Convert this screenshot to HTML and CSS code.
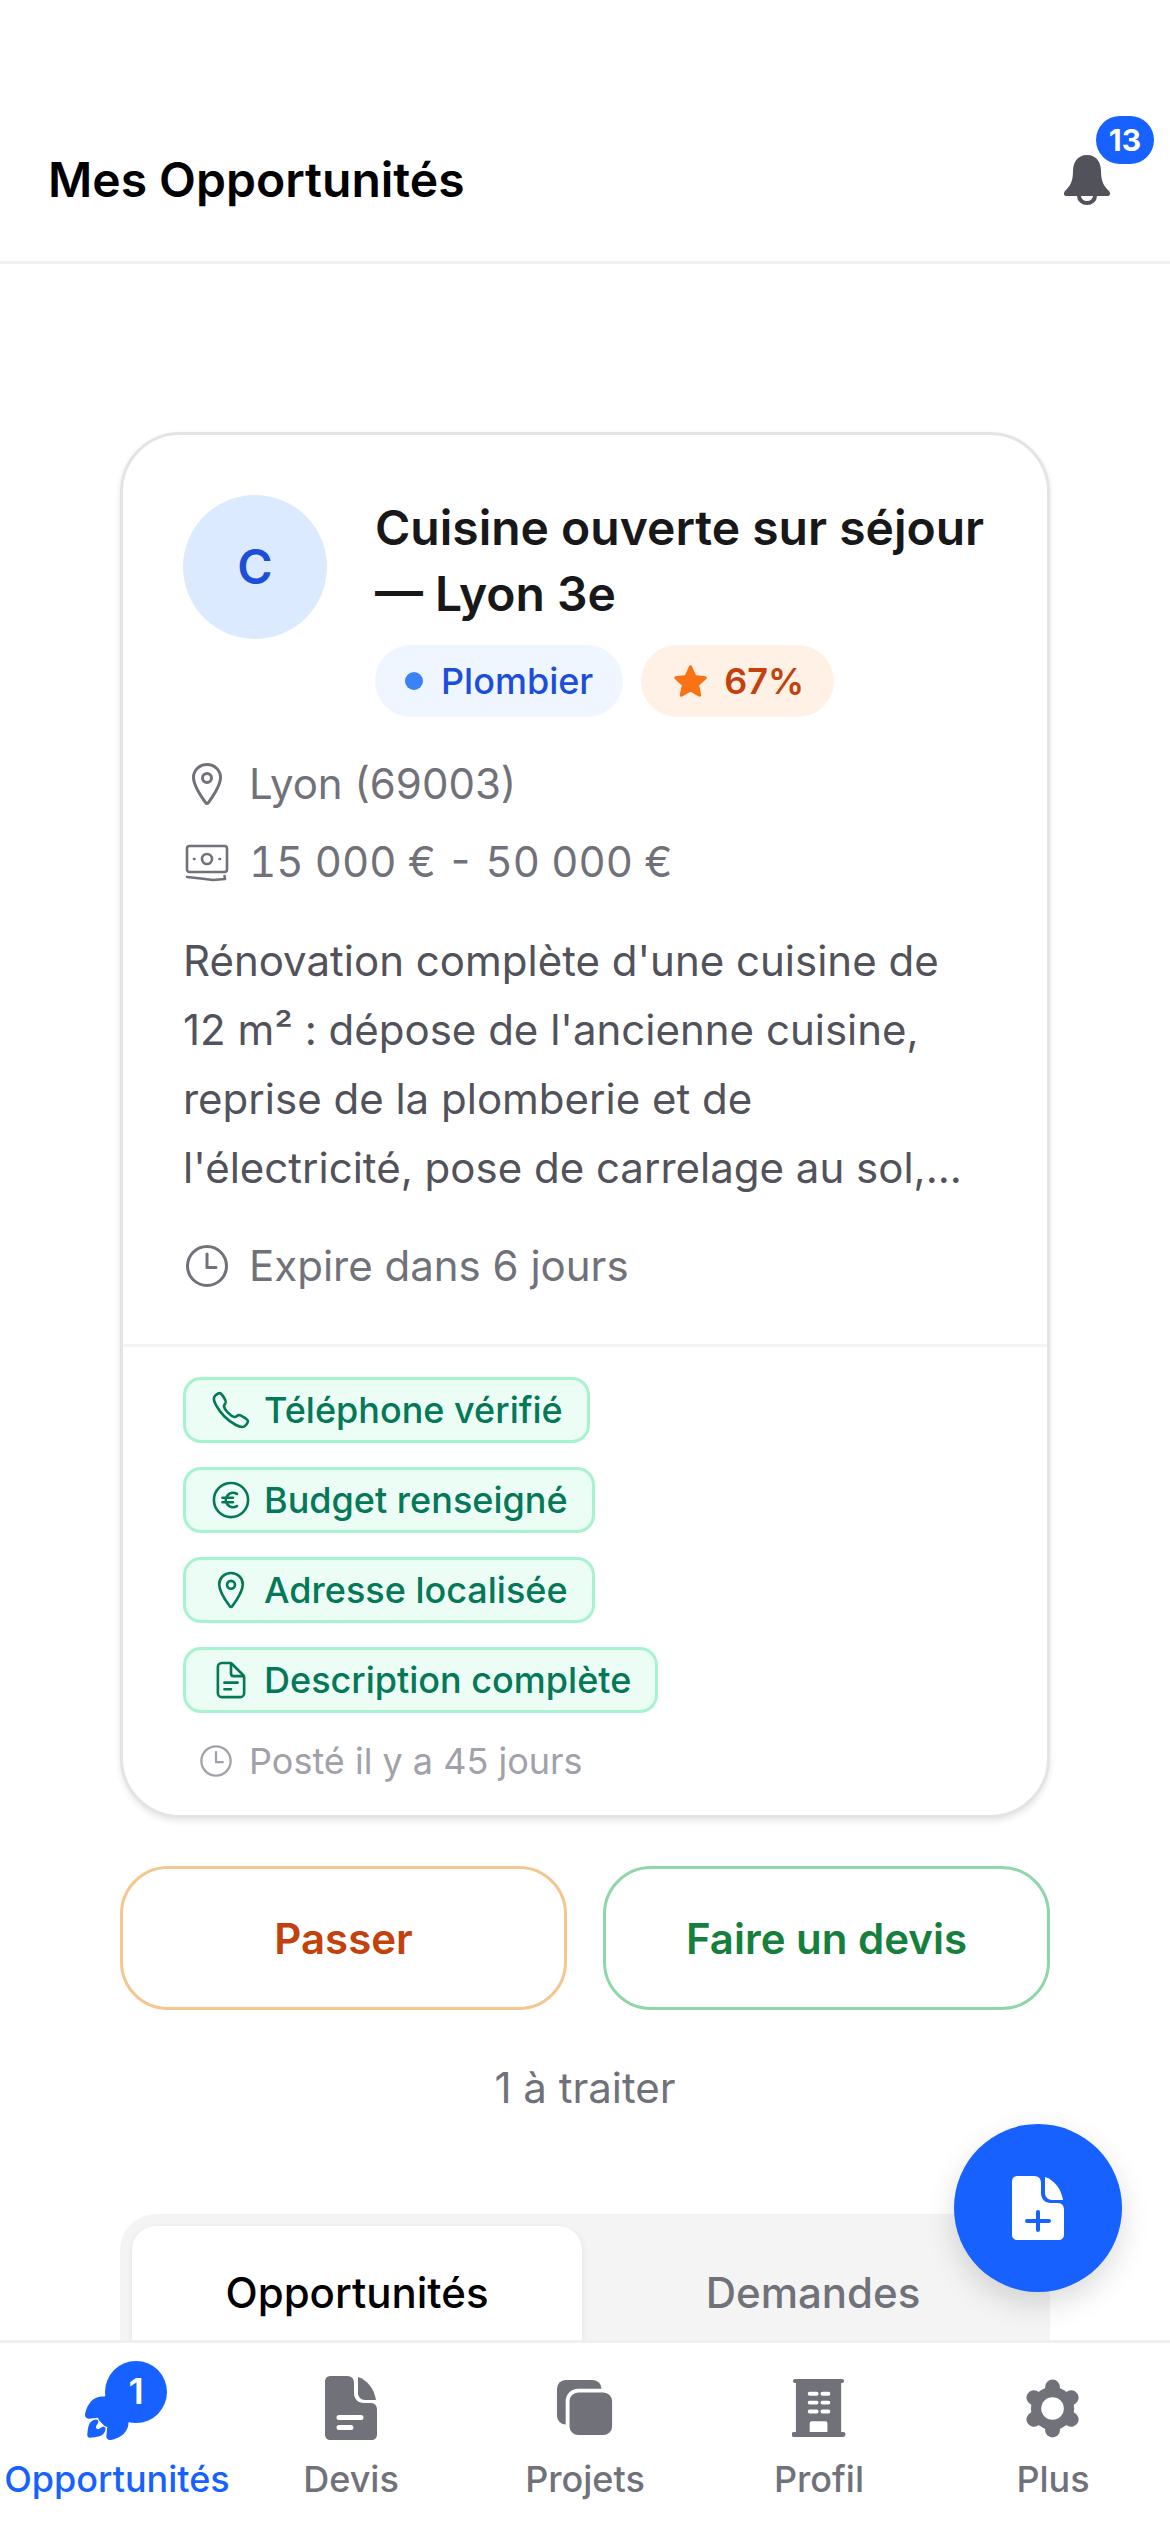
FILE: index.html
```html
<!DOCTYPE html>
<html lang="fr">
<head>
    <meta charset="utf-8">
    <title>Mes Opportunités</title>
    <link rel="stylesheet" href="styles.css">
</head>
<body>
    <div class="app">
        <header class="header">
            <h1 class="header-title">Mes Opportunités</h1>
            <div class="bell">
                <svg class="bell-icon" viewBox="0 0 48 50">
                    <path fill="#52525b" d="M24 0C34 0 38 8 38 16C38 27 41 31 46 36C48 39 47 41 44 41H4C1 41 0 39 2 36C7 31 10 27 10 16C10 8 14 0 24 0Z"/>
                    <path fill="none" stroke="#52525b" stroke-width="4" d="M16 41a8 7 0 0 0 16 0"/>
                </svg>
                <span class="bell-badge">13</span>
            </div>
        </header>

        <main class="content">
            <section class="card">
                <div class="card-body">
                    <div class="card-top">
                        <div class="avatar">C</div>
                        <div class="card-heading">
                            <h2 class="card-title">Cuisine ouverte sur séjour — Lyon 3e</h2>
                            <div class="pills">
                                <span class="pill pill-blue"><i class="dot"></i>Plombier</span>
                                <span class="pill pill-orange">
                                    <svg class="star" viewBox="0 0 24 24"><path fill="#f97316" stroke="#f97316" stroke-width="2" stroke-linejoin="round" d="M12 3l2.7 6 6.3.7-4.7 4.3 1.3 6.4-5.6-3.3-5.6 3.3 1.3-6.4L3 9.700l6.300-.7z"/></svg>
                                    67%
                                </span>
                            </div>
                        </div>
                    </div>

                    <div class="meta-list">
                        <div class="meta-row">
                            <svg class="meta-icon" viewBox="0 0 512 512"><path class="line" d="M256 48c-79.500 0-144 61.390-144 137 0 87 96 224.870 131.250 272.490a15.770 15.770 0 0025.500 0C304 409.890 400 272.070 400 185c0-75.610-64.500-137-144-137z"/><circle class="line" cx="256" cy="192" r="48"/></svg>
                            Lyon (69003)
                        </div>
                        <div class="meta-row meta-money">
                            <svg class="meta-icon" viewBox="-2 -2 48 48"><g fill="none" stroke="currentColor" stroke-width="2.600" stroke-linecap="round" stroke-linejoin="round"><rect x="2" y="6" width="40" height="26" rx="2.500"/><circle cx="22" cy="19" r="5"/><path d="M9 19h.5M34.500 19h.5M2 37l14 1.500 12 1.500 12-1-0.500-3"/></g></svg>
                            15 000 € - 50 000 €
                        </div>
                    </div>

                    <p class="description">Rénovation complète d'une cuisine de 12 m² : dépose de l'ancienne cuisine, reprise de la plomberie et de l'électricité, pose de carrelage au sol,...</p>

                    <div class="meta-row expire">
                        <svg class="meta-icon" viewBox="0 0 512 512"><circle class="line" cx="256" cy="256" r="208"/><path class="line" d="M256 128v144h96"/></svg>
                        Expire dans 6 jours
                    </div>
                </div>

                <div class="card-footer">
                    <div class="tag">
                        <svg class="tag-icon" viewBox="0 0 512 512"><path class="line" d="M451 374c-15.880-16-54.340-39.350-73-48.760-24.300-12.240-26.300-13.240-45.400.95-12.740 9.470-21.210 17.930-36.120 14.750s-47.310-21.110-75.680-49.390-47.340-61.620-50.530-76.480 5.410-23.230 14.790-36c13.220-18 12.220-21 .92-45.300-8.810-18.900-32.840-57-48.900-72.800C119.900 44 119.900 47 108.830 51.600A160.150 160.150 0 0083 65.370C67 76 58.120 84.830 51.910 98.100s-9 44.380 23.070 102.640 54.570 88.050 101.140 134.490S258.500 406.640 310.850 436c64.760 36.270 89.600 29.200 102.910 23s22.180-15 32.830-31a159.090 159.090 0 0013.800-25.800C465 391.170 468 391.170 451 374z"/></svg>
                        Téléphone vérifié
                    </div>
                    <div class="tag">
                        <svg class="tag-icon" viewBox="0 0 512 512"><circle class="line" cx="256" cy="256" r="208"/><path class="line" d="M328 182a88 88 0 1 0 0 148M152 228h128M152 284h128"/></svg>
                        Budget renseigné
                    </div>
                    <div class="tag">
                        <svg class="tag-icon" viewBox="0 0 512 512"><path class="line" d="M256 48c-79.500 0-144 61.390-144 137 0 87 96 224.870 131.250 272.490a15.770 15.770 0 0025.500 0C304 409.890 400 272.070 400 185c0-75.610-64.500-137-144-137z"/><circle class="line" cx="256" cy="192" r="48"/></svg>
                        Adresse localisée
                    </div>
                    <div class="tag">
                        <svg class="tag-icon" viewBox="0 0 512 512"><path class="line" d="M416 221.250V416a48 48 0 01-48 48H144a48 48 0 01-48-48V96a48 48 0 0148-48h98.750a32 32 0 0122.620 9.370l141.260 141.260a32 32 0 019.370 22.620z"/><path class="line" d="M256 56v120a32 32 0 0032 32h120M176 288h160M176 368h80"/></svg>
                        Description complète
                    </div>
                    <div class="posted">
                        <svg class="posted-icon" viewBox="0 0 512 512"><circle class="line" cx="256" cy="256" r="208"/><path class="line" d="M256 128v144h96"/></svg>
                        Posté il y a 45 jours
                    </div>
                </div>
            </section>

            <div class="actions">
                <button class="action action-pass">Passer</button>
                <button class="action action-quote">Faire un devis</button>
            </div>

            <p class="counter">1 à traiter</p>

            <div class="tabs">
                <div class="tab tab-active">Opportunités</div>
                <div class="tab">Demandes</div>
            </div>
        </main>

        <button class="fab" aria-label="Nouveau devis">
            <svg class="fab-icon" viewBox="0 0 52 64">
                <path fill="#fff" d="M6 0H22C27 0 29 3 29 7V17C29 23 33 27 39 27H46C50 27 52 30 52 34V58C52 62 50 64 46 64H6C2 64 0 62 0 58V6C0 2 2 0 6 0Z"/>
                <path fill="#fff" d="M33 1C42 4 49 12 51 24H40C36 24 33 21 33 17Z"/>
                <path fill="none" stroke="#1661ff" stroke-width="4" stroke-linecap="round" d="M26 36V54M15 45H37"/>
            </svg>
        </button>

        <nav class="nav">
            <div class="nav-item nav-active">
                <div class="nav-icon">
                    <svg viewBox="32 32 448 448" fill="currentColor"><path d="M477.440 50.060a.29.29 0 010-.05 20.400 20.400 0 00-15.130-15.300c-29.800-7.270-76.680.48-128.630 21.280-52.360 21-101.420 52-134.580 85.220A320.700 320.700 0 00169.550 175c-22.330-1-42 2.180-58.570 9.410-57.740 25.410-74.230 90.440-78.620 117.140a25 25 0 0027.190 29h.13l64.320-7.020c.08.82.17 1.570.24 2.260a34.360 34.360 0 009.900 20.720l31.390 31.410a34.270 34.270 0 0020.710 9.910l2.150.23-7 64.240v.13A25 25 0 00206 480a25.250 25.250 0 004.150-.34C237 475.340 302 459.050 327.340 401c7.170-16.460 10.340-36.050 9.450-58.340a314.780 314.780 0 0033.950-29.550c33.430-33.260 64.530-81.920 85.310-133.520 20.690-51.360 28.480-98.590 21.390-129.530z"/><path d="M161.930 386.440a16 16 0 00-11 2.670c-6.390 4.370-12.810 8.690-19.290 12.900-13.110 8.520-28.790-6.440-21-20l12.150-21a16 16 0 00-15.160-24.910A61.250 61.250 0 0072 353.560c-3.660 3.670-14.790 14.810-20.780 57.260A357.940 357.940 0 0048 447.590 16 16 0 0064 464h.4a359.870 359.870 0 0036.800-3.200c42.470-6 53.610-17.140 57.270-20.800a60.490 60.490 0 0017.390-35.740 16 16 0 00-13.930-17.820z"/></svg>
                    <span class="nav-badge">1</span>
                </div>
                <span class="nav-label">Opportunités</span>
            </div>
            <div class="nav-item">
                <div class="nav-icon">
                    <svg viewBox="0 0 52 64">
                        <path fill="currentColor" fill-rule="evenodd" d="M6 0H22C27 0 29 3 29 7V17C29 23 33 27 39 27H46C50 27 52 30 52 34V58C52 62 50 64 46 64H6C2 64 0 62 0 58V6C0 2 2 0 6 0ZM14 39a2.500 2.500 0 0 0 0 5H36a2.500 2.500 0 0 0 0-5ZM14 49a2.500 2.500 0 0 0 0 5H26a2.500 2.500 0 0 0 0-5Z"/>
                        <path fill="currentColor" d="M33 1C42 4 49 12 51 24H40C36 24 33 21 33 17Z"/>
                    </svg>
                </div>
                <span class="nav-label">Devis</span>
            </div>
            <div class="nav-item">
                <div class="nav-icon nav-icon-sm">
                    <svg viewBox="0 0 61 61">
                        <rect fill="currentColor" x="1" y="1" width="46" height="46" rx="9"/>
                        <rect fill="currentColor" stroke="#fff" stroke-width="4" x="12" y="12" width="48" height="48" rx="11"/>
                    </svg>
                </div>
                <span class="nav-label">Projets</span>
            </div>
            <div class="nav-item">
                <div class="nav-icon nav-icon-sm">
                    <svg viewBox="0 0 54 60">
                        <path fill="currentColor" fill-rule="evenodd" d="M3 0H51A2 2 0 0 1 51 4H50V54H52A2.500 2.500 0 0 1 52 59H2A2.500 2.500 0 0 1 2 54H4V4H3A2 2 0 0 1 3 0ZM18 13a2 2 0 0 0 0 4h7a2 2 0 0 0 0-4ZM31 13a2 2 0 0 0 0 4h6a2 2 0 0 0 0-4ZM18 22a2 2 0 0 0 0 4h7a2 2 0 0 0 0-4ZM31 22a2 2 0 0 0 0 4h6a2 2 0 0 0 0-4ZM18 31a2 2 0 0 0 0 4h7a2 2 0 0 0 0-4ZM31 31a2 2 0 0 0 0 4h6a2 2 0 0 0 0-4ZM20 43a2 2 0 0 0-2 2V54H36V45a2 2 0 0 0-2-2Z"/>
                    </svg>
                </div>
                <span class="nav-label">Profil</span>
            </div>
            <div class="nav-item">
                <div class="nav-icon nav-icon-sm">
                    <svg viewBox="4 2 56 60">
                        <g stroke="currentColor" stroke-width="15" stroke-linecap="round">
                            <path d="M32 10V54"/>
                            <path d="M13 21L51 43"/>
                            <path d="M51 21L13 43"/>
                        </g>
                        <circle fill="currentColor" cx="32" cy="32" r="22"/>
                        <circle fill="#fff" cx="32" cy="32" r="11.500"/>
                    </svg>
                </div>
                <span class="nav-label">Plus</span>
            </div>
        </nav>
    </div>
</body>
</html>
```

FILE: styles.css
```css
* {
    box-sizing: border-box;
}

html, body {
    margin: 0;
    padding: 0;
    height: 100%;
}

body {
    font-family: Inter, "Noto Sans", sans-serif;
    background: #fff;
    color: #18181b;
}

.app {
    position: relative;
    display: flex;
    flex-direction: column;
    height: 2532px;
    overflow: hidden;
}

/* Header */
.header {
    flex: none;
    display: flex;
    align-items: center;
    justify-content: space-between;
    height: 264px;
    padding: 147px 17px 48px 48px;
    border-bottom: 3px solid #f0f0f2;
}

.header-title {
    margin: 0;
    font-size: 48px;
    line-height: 60px;
    font-weight: 600;
    color: #000;
}

.bell {
    position: relative;
    width: 90px;
    height: 50px;
}

.bell-icon {
    display: block;
    width: 48px;
    height: 50px;
}

.bell-badge {
    position: absolute;
    top: -39px;
    left: 33px;
    min-width: 58px;
    height: 48px;
    padding: 0 9px;
    border-radius: 24px;
    background: #1661ff;
    color: #fff;
    font-size: 30px;
    font-weight: 700;
    line-height: 48px;
    text-align: center;
}

/* Main column, runs under the nav */
.content {
    flex: 1;
    min-height: 0;
    overflow: hidden;
    padding: 168px 120px 0 120px;
}

.card {
    background: #fff;
    border: 3px solid #e4e4e7;
    border-radius: 60px;
    box-shadow: 0 3px 6px rgba(0, 0, 0, 0.1);
}

.card-body {
    padding: 60px 60px 0 60px;
}

.card-top {
    display: flex;
    gap: 48px;
}

.avatar {
    flex: none;
    width: 144px;
    height: 144px;
    border-radius: 50%;
    background: #dbeafe;
    color: #1d4ed8;
    font-size: 48px;
    font-weight: 600;
    line-height: 144px;
    text-align: center;
}

.card-heading {
    flex: 1;
    min-width: 0;
}

.card-title {
    margin: 0;
    font-size: 48px;
    line-height: 66px;
    font-weight: 600;
    color: #18181b;
}

.pills {
    display: flex;
    gap: 18px;
    margin-top: 18px;
}

.pill {
    display: flex;
    align-items: center;
    height: 72px;
    padding: 0 30px;
    border-radius: 36px;
    font-size: 36px;
    font-weight: 500;
}

.pill-blue {
    background: #eff6ff;
    color: #1d4ed8;
}

.dot {
    width: 18px;
    height: 18px;
    margin-right: 18px;
    border-radius: 50%;
    background: #3b82f6;
}

.pill-orange {
    background: #fff1e6;
    color: #c2410c;
    font-weight: 600;
}

.star {
    width: 39px;
    height: 39px;
    margin-right: 14px;
}

.meta-list {
    display: flex;
    flex-direction: column;
    gap: 24px;
    margin-top: 40px;
}

.meta-row {
    display: flex;
    align-items: center;
    gap: 18px;
    height: 54px;
    font-size: 42px;
    line-height: 54px;
    color: #71717a;
}

.meta-money {
    font-variant-numeric: tabular-nums;
}

.meta-icon {
    flex: none;
    width: 48px;
    height: 48px;
    color: #71717a;
}

.line {
    fill: none;
    stroke: currentColor;
    stroke-width: 32;
    stroke-linecap: round;
    stroke-linejoin: round;
}

.description {
    margin: 37px 0 0 0;
    font-size: 42px;
    line-height: 69px;
    color: #52525b;
}

.expire {
    margin-top: 37px;
}

.card-footer {
    display: flex;
    flex-direction: column;
    align-items: flex-start;
    gap: 24px;
    margin-top: 51px;
    padding: 30px 60px 30px 60px;
    border-top: 3px solid #f4f4f5;
}

.tag {
    display: flex;
    align-items: center;
    gap: 12px;
    height: 66px;
    padding: 0 24px;
    border: 3px solid #a7f3d0;
    border-radius: 18px;
    background: #ecfdf5;
    color: #047857;
    font-size: 36px;
    font-weight: 500;
}

.tag-icon {
    flex: none;
    width: 42px;
    height: 42px;
}

.posted {
    display: flex;
    align-items: center;
    gap: 15px;
    margin-left: 15px;
    font-size: 36px;
    line-height: 48px;
    color: #a1a1aa;
}

.posted-icon {
    flex: none;
    width: 36px;
    height: 36px;
}

/* Buttons under the card */
.actions {
    display: flex;
    gap: 36px;
    margin-top: 48px;
}

.action {
    flex: 1;
    height: 144px;
    border-radius: 48px;
    background: #fff;
    font-family: inherit;
    font-size: 42px;
    font-weight: 600;
}

.action-pass {
    border: 3px solid #f5c68f;
    color: #c2410c;
}

.action-quote {
    border: 3px solid #8fd6ab;
    color: #15803d;
}

.counter {
    margin: 48px 0 0 0;
    font-size: 42px;
    line-height: 60px;
    color: #71717a;
    text-align: center;
}

.tabs {
    display: flex;
    gap: 6px;
    height: 180px;
    margin-top: 96px;
    padding: 12px;
    border-radius: 36px;
    background: #f4f4f5;
}

.tab {
    flex: 1;
    height: 156px;
    padding-top: 40px;
    border-radius: 24px;
    font-size: 42px;
    line-height: 54px;
    font-weight: 500;
    color: #71717a;
    text-align: center;
}

.tab-active {
    background: #fff;
    color: #000;
    box-shadow: 0 2px 6px rgba(0, 0, 0, 0.08);
}

/* Floating button */
.fab {
    position: absolute;
    left: 954px;
    top: 2124px;
    display: flex;
    align-items: center;
    justify-content: center;
    width: 168px;
    height: 168px;
    padding: 0;
    border: none;
    border-radius: 50%;
    background: #1661ff;
    box-shadow: 0 12px 30px rgba(0, 0, 0, 0.14);
}

.fab-icon {
    width: 52px;
    height: 64px;
}

/* Bottom nav */
.nav {
    flex: none;
    position: relative;
    display: flex;
    height: 192px;
    padding: 33px 0 0 0;
    border-top: 3px solid #f0f0f2;
    background: #fff;
}

.nav-item {
    flex: 1;
    display: flex;
    flex-direction: column;
    align-items: center;
    color: #71717a;
}

.nav-active {
    color: #1661ff;
}

.nav-icon {
    position: relative;
    height: 64px;
    width: 64px;
    display: flex;
    justify-content: center;
}

.nav-icon svg {
    display: block;
    height: 64px;
    width: auto;
}

.nav-icon-sm {
    align-items: center;
}

.nav-icon-sm svg {
    height: 59px;
}

.nav-badge {
    position: absolute;
    top: -15px;
    left: 20px;
    width: 62px;
    height: 62px;
    border-radius: 50%;
    background: #1661ff;
    color: #fff;
    font-size: 36px;
    font-weight: 600;
    line-height: 60px;
    text-align: center;
}

.nav-label {
    margin-top: 17px;
    font-size: 36px;
    line-height: 44px;
    font-weight: 500;
}
```
